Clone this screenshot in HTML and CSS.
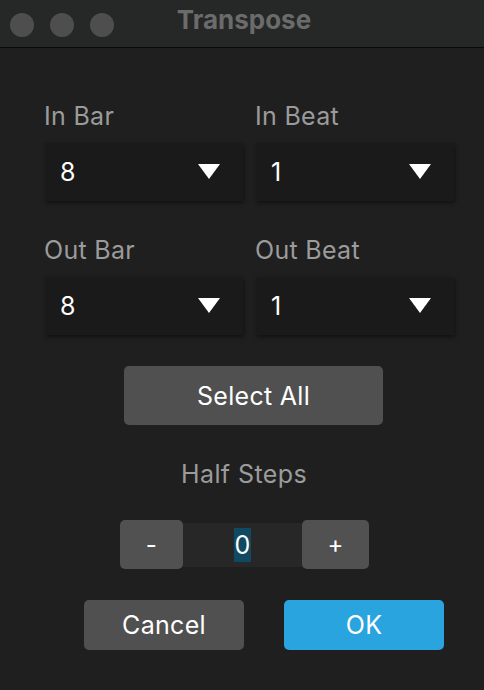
FILE: index.html
```html
<!DOCTYPE html>
<html>
<head>
    <title>Transpose</title>
    <link rel="stylesheet" href="styles.css">
</head>
<body>
    <div class="title-bar">
        <div class="lights">
            <span class="light"></span>
            <span class="light"></span>
            <span class="light"></span>
        </div>
        <h1 class="title">Transpose</h1>
    </div>

    <div class="dialog">
        <div class="fields">
            <div class="field">
                <label>In Bar</label>
                <div class="dropdown"><span>8</span><span class="arrow"></span></div>
            </div>
            <div class="field">
                <label>In Beat</label>
                <div class="dropdown"><span>1</span><span class="arrow"></span></div>
            </div>
            <div class="field">
                <label>Out Bar</label>
                <div class="dropdown"><span>8</span><span class="arrow"></span></div>
            </div>
            <div class="field">
                <label>Out Beat</label>
                <div class="dropdown"><span>1</span><span class="arrow"></span></div>
            </div>
        </div>

        <button class="select-all">Select All</button>

        <p class="steps-label">Half Steps</p>
        <div class="stepper">
            <button class="step-btn minus">-</button>
            <div class="step-value"><span class="selected">0</span></div>
            <button class="step-btn plus">+</button>
        </div>

        <div class="actions">
            <button class="cancel">Cancel</button>
            <button class="ok">OK</button>
        </div>
    </div>
</body>
</html>
```

FILE: styles.css
```css
body {
    margin: 0;
    background-color: #1f1f1f;
    font-family: 'Inter', 'Liberation Sans', sans-serif;
    color: #ffffff;
}

.title-bar {
    height: 47px;
    background-color: #262727;
    border-bottom: 1px solid #0a0a0a;
    display: flex;
    align-items: center;
    position: relative;
}

.lights {
    display: flex;
    gap: 16px;
    padding-left: 10px;
    margin-top: 2px;
}

.light {
    width: 24px;
    height: 24px;
    border-radius: 50%;
    background-color: #4e4e4e;
}

.title {
    position: absolute;
    left: 0;
    right: 0;
    top: 0;
    margin: 0;
    text-align: center;
    line-height: 40px;
    font-size: 26px;
    font-weight: 700;
    color: #6b6b6b;
    padding-left: 4px;
}

.dialog {
    padding: 53px 30px 0 45px;
}

.fields {
    display: grid;
    grid-template-columns: 198px 198px;
    column-gap: 13px;
    row-gap: 34px;
}

.field label {
    display: block;
    font-size: 25px;
    line-height: 30px;
    letter-spacing: 0.3px;
    color: #9b9b9b;
    margin-bottom: 12px;
    margin-left: -1px;
}

.dropdown {
    height: 58px;
    background-color: #1a1a1a;
    box-shadow: 1px 2px 4px rgba(0, 0, 0, 0.45);
    display: flex;
    align-items: center;
    justify-content: space-between;
    padding: 0 23px 0 15px;
    font-size: 25px;
}

.arrow {
    width: 0;
    height: 0;
    border-left: 11.5px solid transparent;
    border-right: 11.5px solid transparent;
    border-top: 15px solid #ffffff;
    margin-top: -2px;
}

button {
    font-family: 'Inter', 'Liberation Sans', sans-serif;
    color: #ffffff;
    border: none;
    font-size: 25px;
    letter-spacing: 0.3px;
    cursor: pointer;
}

.select-all {
    display: block;
    width: 259px;
    height: 59px;
    margin: 31px 0 0 79px;
    background-color: #505050;
    border-radius: 5px;
}

.steps-label {
    margin: 0;
    padding: 34px 0 0 2px;
    margin-left: -45px;
    width: 484px;
    text-align: center;
    font-size: 25px;
    line-height: 30px;
    letter-spacing: 0.4px;
    color: #9b9b9b;
}

.stepper {
    display: flex;
    align-items: center;
    margin: 31px 0 0 75px;
}

.step-btn {
    height: 49px;
    background-color: #515151;
    border-radius: 5px;
    font-size: 24px;
}

.minus {
    width: 63px;
}

.plus {
    width: 67px;
}

.step-value {
    width: 119px;
    height: 44px;
    background-color: #272727;
    display: flex;
    align-items: center;
    justify-content: center;
    font-size: 25px;
}

.selected {
    background-color: #0f4a62;
    line-height: 34px;
    padding: 0 1px;
}

.actions {
    display: flex;
    gap: 40px;
    margin: 31px 0 0 39px;
}

.cancel,
.ok {
    width: 160px;
    height: 50px;
    border-radius: 5px;
}

.cancel {
    background-color: #505050;
}

.ok {
    background-color: #29a4de;
}
```
